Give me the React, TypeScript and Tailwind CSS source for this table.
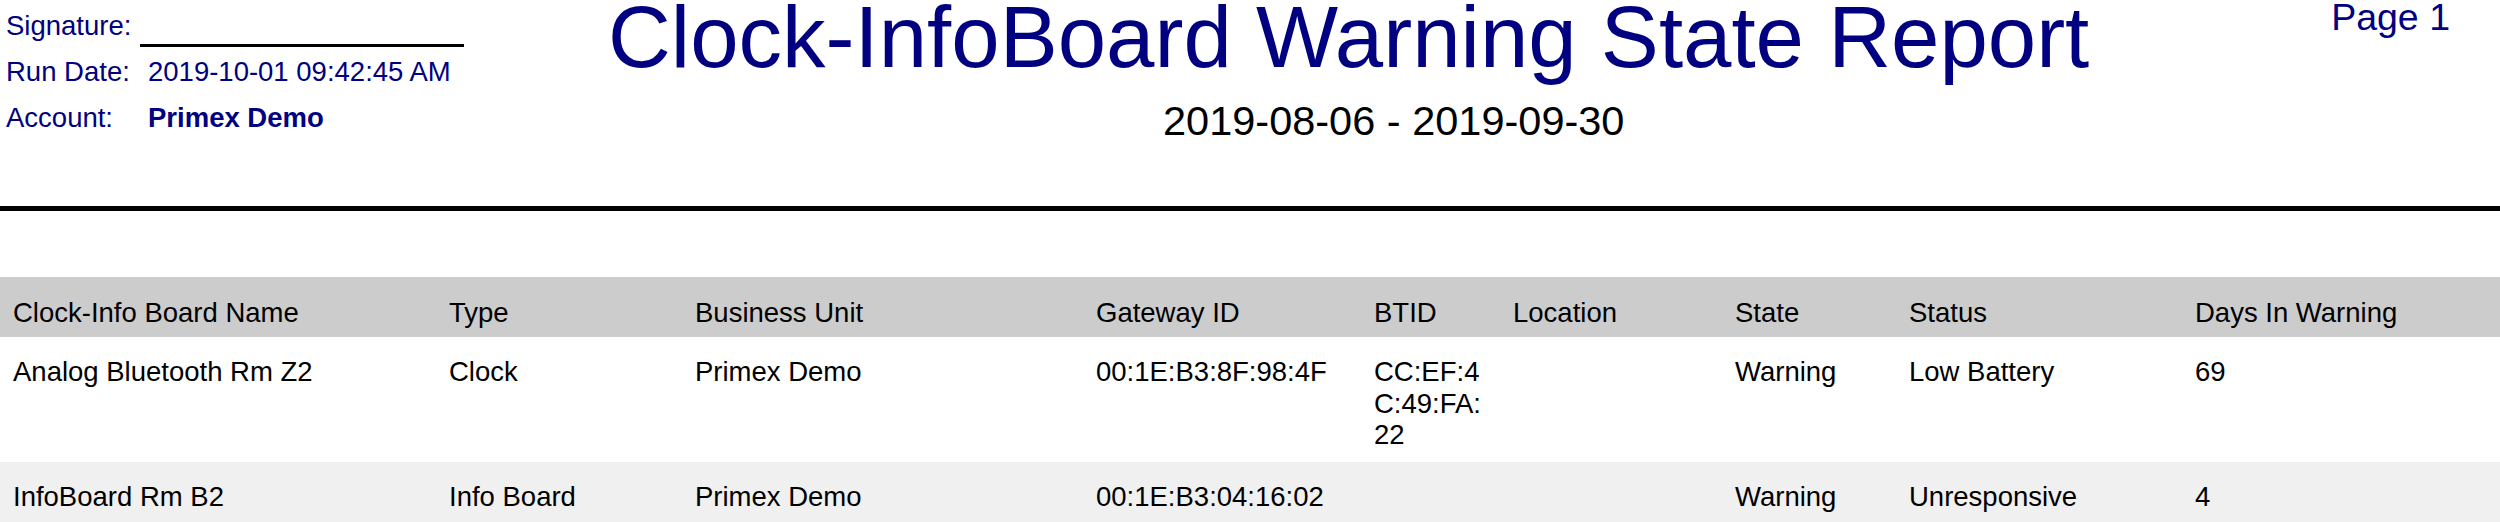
import React from 'react'

const columns = [
  'Clock-Info Board Name',
  'Type',
  'Business Unit',
  'Gateway ID',
  'BTID',
  'Location',
  'State',
  'Status',
  'Days In Warning',
]

const rows = [
  {
    id: 1,
    name: 'Analog Bluetooth Rm Z2',
    type: 'Clock',
    unit: 'Primex Demo',
    gateway: '00:1E:B3:8F:98:4F',
    btid: 'CC:EF:4C:49:FA:22',
    location: '',
    state: 'Warning',
    status: 'Low Battery',
    days: 69,
  },
  {
    id: 2,
    name: 'InfoBoard Rm B2',
    type: 'Info Board',
    unit: 'Primex Demo',
    gateway: '00:1E:B3:04:16:02',
    btid: '',
    location: '',
    state: 'Warning',
    status: 'Unresponsive',
    days: 4,
  },
]

// column widths follow the printed report (text start to text start)
const gridCols = 'grid grid-cols-[436px_246px_401px_278px_139px_222px_174px_286px_1fr] pl-[13px]'

export default function App() {
  return (
    <div className="w-[2500px] h-[522px] overflow-hidden bg-white font-['Liberation_Sans',Arial,sans-serif]">
      {/* Report header */}
      <div className="flex h-[206px]">
        <div className="w-[608px] shrink-0 pl-[6px] pt-[3px] text-[27.5px] leading-[46px] text-[#000080]">
          <div className="flex">
            <span className="w-[134px]">Signature:</span>
            <div className="w-[324px] h-[44px] border-b-[3px] border-black" />
          </div>
          <div className="flex">
            <span className="w-[142px]">Run Date:</span>
            <span>2019-10-01 09:42:45 AM</span>
          </div>
          <div className="flex">
            <span className="w-[142px]">Account:</span>
            <span className="font-bold">Primex Demo</span>
          </div>
        </div>

        <div className="flex flex-col">
          <h1 className="-mt-[12px] text-[87px] leading-[98px] text-[#000080] whitespace-nowrap">
            Clock-InfoBoard Warning State Report
          </h1>
          <div className="ml-[555px] mt-[11px] text-[41.5px] leading-[47px] text-black whitespace-nowrap">
            2019-08-06 - 2019-09-30
          </div>
        </div>

        <div className="ml-auto -mt-[4px] pr-[50px] text-[37.5px] leading-[42px] text-[#000080] whitespace-nowrap">
          Page 1
        </div>
      </div>

      <div className="h-[5px] bg-black" />

      {/* Table */}
      <div className="mt-[66px] text-[27.5px] leading-[31.5px] text-black">
        <div className={`${gridCols} h-[60px] pt-[20px] bg-[#cccccc]`}>
          {columns.map((col) => (
            <div key={col} className="pr-[24px] whitespace-nowrap">{col}</div>
          ))}
        </div>

        {rows.map((r, i) => (
          <div
            key={r.id}
            className={`${gridCols} pt-[19px] pb-[11px] ${i % 2 === 1 ? 'bg-[#f0f0f0]' : 'bg-white'}`}
          >
            <div className="pr-[24px]">{r.name}</div>
            <div className="pr-[24px]">{r.type}</div>
            <div className="pr-[24px]">{r.unit}</div>
            <div className="pr-[24px]">{r.gateway}</div>
            <div className="pr-[24px] break-all">{r.btid}</div>
            <div className="pr-[24px]">{r.location}</div>
            <div className="pr-[24px]">{r.state}</div>
            <div className="pr-[24px]">{r.status}</div>
            <div className="pr-[24px]">{r.days}</div>
          </div>
        ))}
      </div>
    </div>
  )
}
